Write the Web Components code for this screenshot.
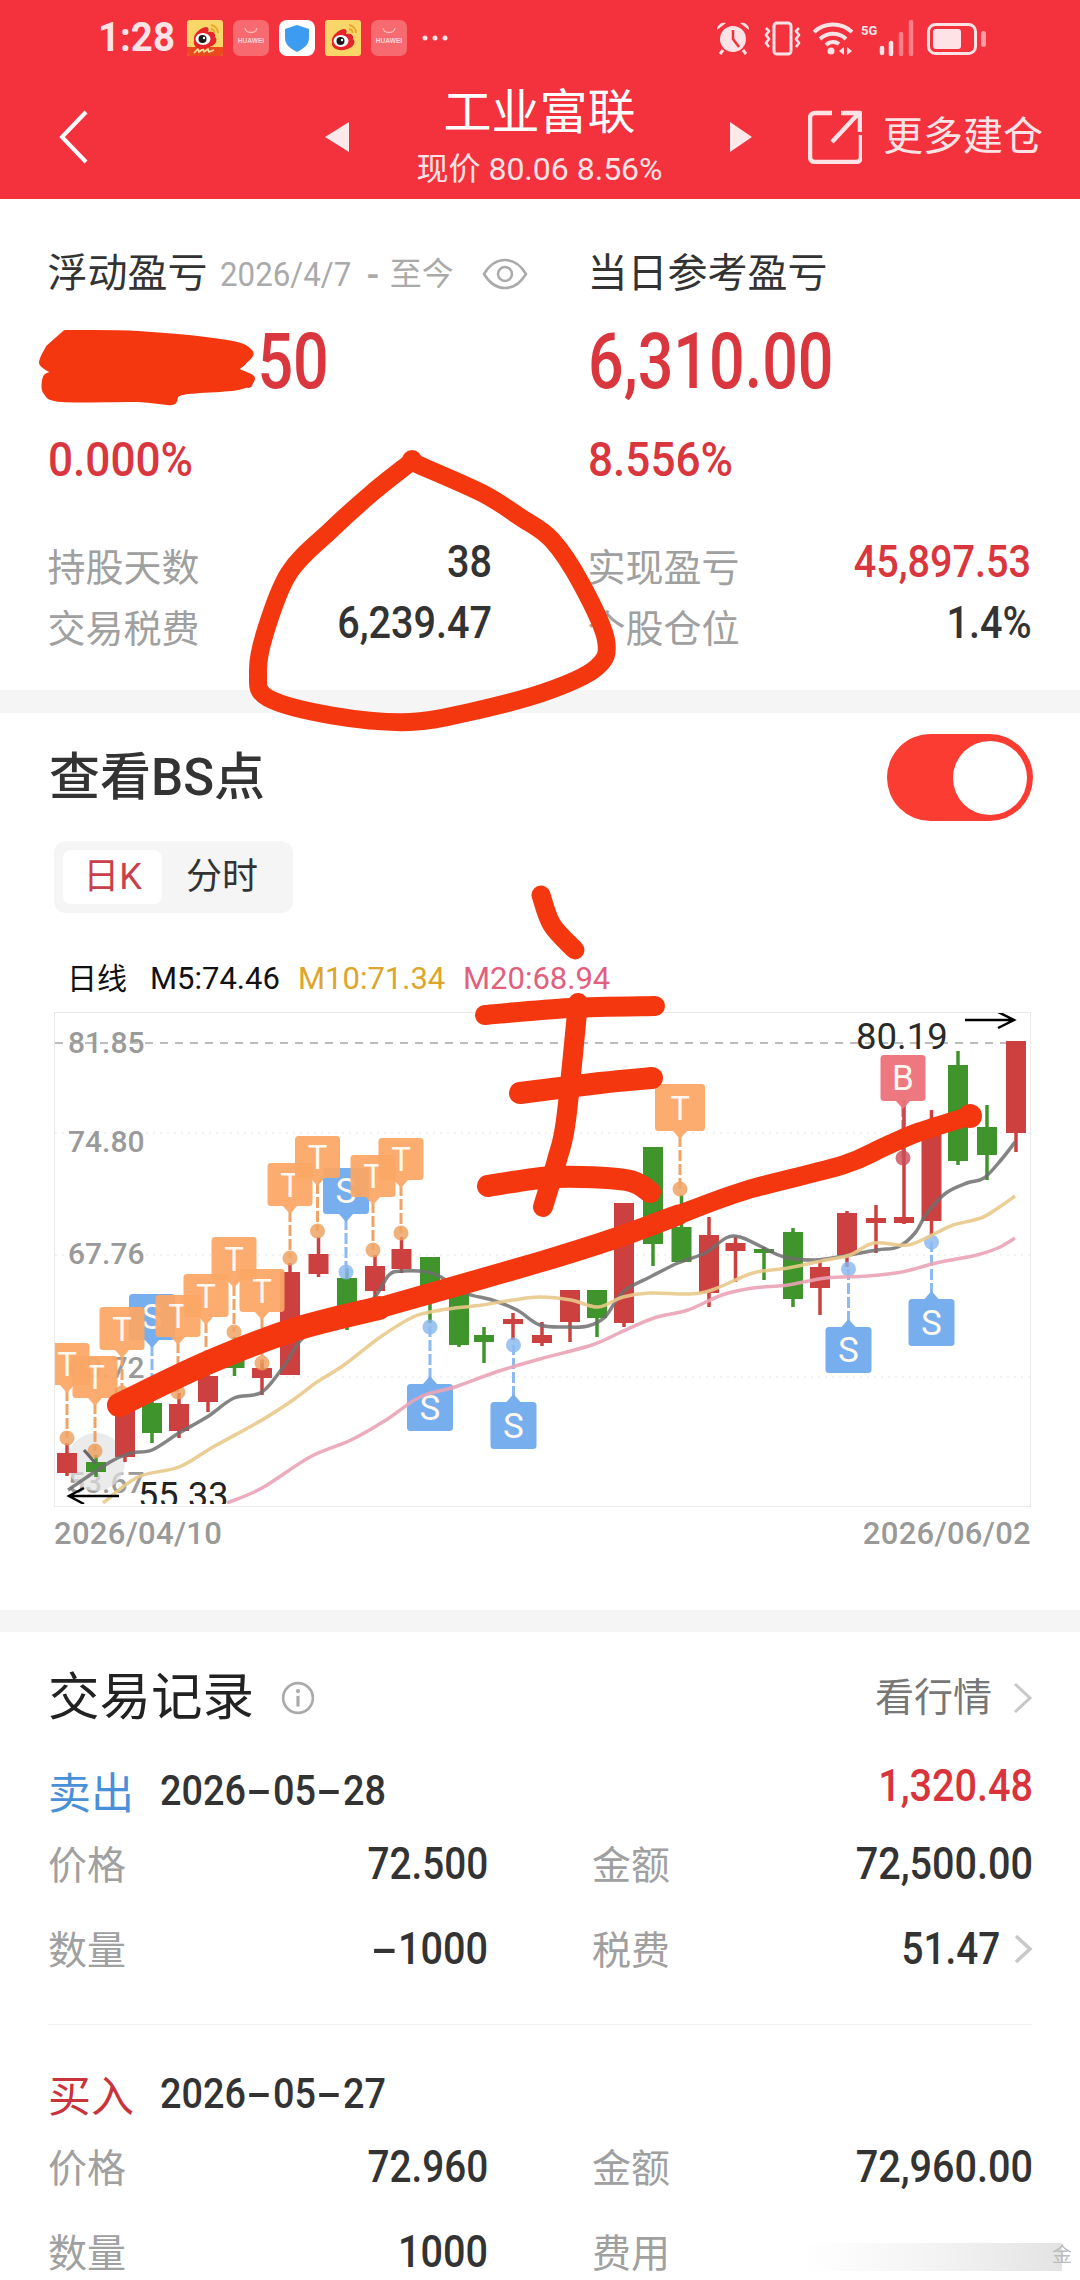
<!DOCTYPE html>
<html lang="zh">
<head>
<meta charset="utf-8">
<title>工业富联</title>
<style>
  html, body { margin: 0; padding: 0; background: #fff; }
  body {
    position: relative;
    width: 1080px;
    height: 2280px;
    overflow: hidden;
    font-family: Roboto, "Noto Sans CJK SC", sans-serif;
  }
</style>
</head>
<body>
<app-header></app-header>
<pnl-summary></pnl-summary>
<bs-panel></bs-panel>
<trade-list>
  <trade-record side="卖出" date="2026-05-28" profit="1,320.48" price="72.500" total="72,500.00" qty="-1000" fee-label="税费" fee="51.47"></trade-record>
  <trade-record side="买入" date="2026-05-27" price="72.960" total="72,960.00" qty="1000" fee-label="费用"></trade-record>
</trade-list>
<ink-layer></ink-layer>

<script>
const CJK = 'Roboto, "Noto Sans CJK SC", sans-serif';

// smooth line through points, page coordinates
function smooth(pts) {
  let d = `M${pts[0][0]} ${pts[0][1]}`;
  for (let i = 0; i < pts.length - 1; i++) {
    const p0 = pts[i - 1] || pts[i], p1 = pts[i], p2 = pts[i + 1], p3 = pts[i + 2] || p2;
    const c1x = p1[0] + (p2[0] - p0[0]) / 6, c1y = p1[1] + (p2[1] - p0[1]) / 6;
    const c2x = p2[0] - (p3[0] - p1[0]) / 6, c2y = p2[1] - (p3[1] - p1[1]) / 6;
    d += ` C${c1x.toFixed(1)} ${c1y.toFixed(1)} ${c2x.toFixed(1)} ${c2y.toFixed(1)} ${p2[0]} ${p2[1]}`;
  }
  return d;
}

// the app's digits are a narrow DIN style face, so Roboto gets squeezed
class NumText extends HTMLElement {
  constructor() {
    super();
    this.attachShadow({ mode: 'open' });
  }
  connectedCallback() {
    const sx = this.getAttribute('sx') || '0.9';
    const side = this.getAttribute('side') || 'left';
    this.shadowRoot.innerHTML = `
      <style>
        :host {
          display: inline-block;
          font-family: Roboto, sans-serif;
          white-space: nowrap;
          transform: scaleX(${sx});
          transform-origin: ${side} center;
        }
      </style><slot></slot>`;
  }
}
customElements.define('num-text', NumText);

class AppHeader extends HTMLElement {
  constructor() {
    super();
    this.attachShadow({ mode: 'open' });
  }
  weibo(strip) {
    return `<svg class="app" width="36" height="36" viewBox="0 0 36 36">
      <rect width="36" height="36" rx="3" fill="#f9d668"/>
      ${strip ? '<path d="M0 27H36V33a3 3 0 0 1-3 3H3a3 3 0 0 1-3-3z" fill="#ea4a1c"/><path d="M7 33l4-4 1 3 4-3 1 3 4-3 1 3 5-2" stroke="#fbe3a0" stroke-width="1.6" fill="none"/>' : ''}
      <path d="M7 ${strip ? 20 : 22}c-1-6 6-12 12-13 3 0 3 3 2 5 5-1 8 1 7 5 3 2 2 9-9 11C11 31 6 27 7 ${strip ? 20 : 22}z" fill="#e6242a"/>
      <ellipse cx="16" cy="${strip ? 19 : 21}" rx="7.5" ry="6" fill="#fff"/>
      <circle cx="15.5" cy="${strip ? 19 : 21}" r="4" fill="#1a1a1a"/>
      <circle cx="17" cy="${strip ? 18 : 20}" r="1.2" fill="#fff"/>
      <path d="M24 5a8 8 0 0 1 7 8M24 9a4 4 0 0 1 3.500 4" stroke="#e8a72c" stroke-width="1.800" fill="none"/>
    </svg>`;
  }
  huawei() {
    return `<svg class="app" width="36" height="36" viewBox="0 0 36 36">
      <rect width="36" height="36" rx="7" fill="#f76a70"/>
      <path d="M12 8c1 6 11 6 12 0" stroke="#fbbcbe" stroke-width="1.300" fill="none"/>
      <text x="18" y="23" font-family="Liberation Sans, sans-serif" font-size="6.600" font-weight="700" text-anchor="middle" fill="#fcd4d5">HUAWEI</text>
    </svg>`;
  }
  connectedCallback() {
    this.shadowRoot.innerHTML = `
      <style>
        :host {
          display: block;
          height: 199px;
          background: #f4323d;
          color: #fff;
          font-family: ${CJK};
        }
        .status {
          display: flex;
          align-items: center;
          height: 75px;
          padding-left: 98px;
          box-sizing: border-box;
        }
        .time {
          width: 89px;
          font-size: 40px;
          font-weight: 700;
          color: #fde3e5;
          line-height: 75px;
        }
        .apps { display: flex; align-items: center; gap: 10px; }
        .app { display: block; }
        .more { margin-left: 15px; display: block; }
        .sys { margin-left: 268px; display: block; }
        .nav {
          display: flex;
          align-items: center;
          height: 124px;
          padding-left: 58px;
        }
        .back { width: 267px; flex: none; }
        .center {
          width: 381px;
          flex: none;
          align-self: stretch;
          text-align: center;
          padding-top: 8px;
          box-sizing: border-box;
        }
        .title { font-size: 48px; line-height: 60px; }
        .sub { font-size: 32px; line-height: 40px; margin-top: 6px; color: #fde3e5; }
        .share { margin-left: 56px; }
        .open { margin-left: 21px; font-size: 40px; line-height: 60px; color: #fde3e5; white-space: nowrap; }
        svg { display: block; flex: none; }
      </style>
      <div class="status">
        <span class="time"><num-text sx="0.96">1:28</num-text></span>
        <div class="apps">
          ${this.weibo(true)}${this.huawei()}
          <svg class="app" width="36" height="36" viewBox="0 0 36 36">
            <rect width="36" height="36" rx="8" fill="#fff"/>
            <path d="M18 5l12 4v9c0 7-6 11-12 14C12 29 6 25 6 18V9z" fill="#3d9cf0"/>
          </svg>
          ${this.weibo(false)}${this.huawei()}
        </div>
        <svg class="more" width="26" height="8" viewBox="0 0 26 8">
          <circle cx="3" cy="4" r="2.500" fill="#fde3e5"/><circle cx="13" cy="4" r="2.500" fill="#fde3e5"/><circle cx="23" cy="4" r="2.500" fill="#fde3e5"/>
        </svg>
        <svg class="sys" width="272" height="36" viewBox="713 18 272 36" fill="none" stroke="#fde3e5">
          <!-- alarm -->
          <circle cx="730" cy="37" r="13" fill="#fde3e5" stroke="none"/>
          <path d="M730 28v9l6 8" stroke="#f4323d" stroke-width="2.500"/>
          <path d="M714 28a7 7 0 0 1 9-7zM746 28a7 7 0 0 0-9-7z" fill="#fde3e5" stroke="none"/>
          <path d="M720 48l-3 4M740 48l3 4" stroke-width="3"/>
          <!-- vibrate -->
          <rect x="771" y="21" width="17" height="31" rx="3" stroke-width="3"/>
          <path d="M763 26l3 3-3 4 3 4-3 4 3 4M796 26l-3 3 3 4-3 4 3 4-3 4" stroke-width="2.500"/>
          <!-- wifi -->
          <path d="M811 30a28 28 0 0 1 38 0M817 37a19 19 0 0 1 26 0M823 43a10 10 0 0 1 13-1" stroke-width="4"/>
          <circle cx="828" cy="49" r="3.500" fill="#fde3e5" stroke="none"/>
          <path d="M841 45l-5 4 5 4zM844 45l5 4-5 4z" fill="#fde3e5" stroke="none"/>
          <!-- signal -->
          <text x="858" y="33" font-family="Roboto, sans-serif" font-size="13" font-weight="700" fill="#fde3e5" stroke="none">5G</text>
          <path d="M879 46v5" stroke-width="4.500" stroke-linecap="round"/>
          <path d="M888 41v11" stroke-width="4.500" stroke-linecap="round"/>
          <path d="M898 32v20M908 20v32" stroke="#fb7f86" stroke-width="4.500" stroke-linecap="round"/>
          <!-- battery -->
          <rect x="925.500" y="22.500" width="47" height="29" rx="7" stroke-width="3"/>
          <rect x="930" y="27" width="28" height="20" rx="3" fill="#fde3e5" stroke="none"/>
          <rect x="978" y="29" width="5" height="16" rx="2.500" fill="#fb9da3" stroke="none"/>
        </svg>
      </div>
      <div class="nav">
        <div class="back">
          <svg width="30" height="54" viewBox="0 0 30 54" fill="none" stroke="#fff" stroke-width="4">
            <path d="M28 2L4 27l24 25"/>
          </svg>
        </div>
        <svg width="24" height="30" viewBox="0 0 24 30"><path d="M24 0v30L0 15z" fill="#fde8ea"/></svg>
        <div class="center">
          <div class="title">工业富联</div>
          <div class="sub">现价 80.06 8.56%</div>
        </div>
        <svg width="22" height="30" viewBox="0 0 22 30"><path d="M0 0v30l22-15z" fill="#fde8ea"/></svg>
        <svg class="share" width="54" height="54" viewBox="0 0 54 54" fill="none" stroke="#fde3e5" stroke-width="4.500" stroke-linejoin="round">
          <path d="M24 3H7a5 5 0 0 0-5 5v39a5 5 0 0 0 5 5h41a5 5 0 0 0 5-5V25"/>
          <path d="M24 32L50 4M33 3h19v19"/>
        </svg>
        <span class="open">更多建仓</span>
      </div>`;
  }
}
customElements.define('app-header', AppHeader);

class StatRow extends HTMLElement {
  constructor() {
    super();
    this.attachShadow({ mode: 'open' });
  }
  connectedCallback() {
    const value = this.getAttribute('value');
    const color = this.getAttribute('tone') === 'up' ? '#d9363e' : '#333';
    this.shadowRoot.innerHTML = `
      <style>
        :host {
          display: flex;
          justify-content: space-between;
          align-items: center;
          height: 61px;
          font-family: ${CJK};
        }
        .label { font-size: 38px; line-height: 50px; color: #a0a0a0; }
        .value { font-size: 44px; line-height: 50px; font-weight: 500; color: ${color}; padding-bottom: 12px; }
      </style>
      <span class="label"><slot></slot></span>
      <span class="value"><num-text side="right">${value}</num-text></span>`;
  }
}
customElements.define('stat-row', StatRow);

class PnlSummary extends HTMLElement {
  constructor() {
    super();
    this.attachShadow({ mode: 'open' });
  }
  connectedCallback() {
    this.shadowRoot.innerHTML = `
      <style>
        :host {
          display: grid;
          grid-template-columns: 540px 444px;
          padding: 50px 0 0 47.500px;
          height: 514px;
          box-sizing: border-box;
          border-bottom: 23px solid #f5f5f5;
          font-family: ${CJK};
        }
        .head { display: flex; align-items: center; height: 50px; font-size: 40px; line-height: 50px; color: #333; white-space: nowrap; }
        .range { display: flex; align-items: center; color: #aaa; font-size: 32px; margin-left: 12px; }
        .range num-text { font-size: 34px; margin-right: -11px; }
        .dash { font-family: Roboto, sans-serif; font-weight: 700; font-size: 34px; margin: 0 10px 0 15px; }
        .eye { margin-left: 28px; display: block; }
        .big { font-size: 77px; line-height: 80px; height: 80px; margin-top: 23px; font-weight: 500; color: #d9363e; white-space: nowrap; }
        .masked { padding-left: 192px; }
        .pct { font-size: 49px; line-height: 56px; height: 56px; margin-top: 30px; font-weight: 500; color: #d9363e; }
        .stats { margin-top: 49px; width: 445px; }
        .stats.right { width: 444px; }
      </style>
      <div>
        <div class="head">浮动盈亏
          <span class="range"><num-text sx="0.92">2026/4/7</num-text><span class="dash">-</span>至今</span>
          <svg class="eye" width="46" height="32" viewBox="0 0 46 32" fill="none" stroke="#aaa" stroke-width="2.500">
            <path d="M2 16C8 6 15 2 23 2s15 4 21 14c-6 10-13 14-21 14S8 26 2 16z"/>
            <circle cx="23" cy="16" r="7"/>
          </svg>
        </div>
        <div class="big masked"><num-text sx="0.815">.50</num-text></div>
        <div class="pct"><num-text>0.000%</num-text></div>
        <div class="stats">
          <stat-row value="38">持股天数</stat-row>
          <stat-row value="6,239.47">交易税费</stat-row>
        </div>
      </div>
      <div>
        <div class="head">当日参考盈亏</div>
        <div class="big"><num-text sx="0.815">6,310.00</num-text></div>
        <div class="pct"><num-text>8.556%</num-text></div>
        <div class="stats right">
          <stat-row value="45,897.53" tone="up">实现盈亏</stat-row>
          <stat-row value="1.4%">个股仓位</stat-row>
        </div>
      </div>`;
  }
}
customElements.define('pnl-summary', PnlSummary);

class KChart extends HTMLElement {
  constructor() {
    super();
    this.attachShadow({ mode: 'open' });
  }
  connectedCallback() {
    // x, body top, body bottom, wick top, wick bottom, colour (r/g)
    const candles = [
      [67,1453,1473,1443,1476,'r'],[96,1462,1472,1455,1477,'g'],[125,1410,1457,1400,1462,'r'],
      [152,1403,1433,1397,1443,'g'],[179,1404,1431,1393,1438,'r'],[208,1376,1402,1360,1412,'r'],
      [234.5,1345,1368,1337,1376,'g'],[262,1368,1378,1360,1395,'r'],[290,1272,1375,1263,1375,'r'],
      [318.5,1254,1274,1237,1277,'r'],[347,1278,1308,1268,1330,'g'],[375,1266,1291,1255,1300,'r'],
      [401.5,1249,1269,1237,1273,'r'],[430,1257,1297,1257,1323,'g'],[459,1290,1345,1290,1347,'g'],
      [484,1335,1342,1327,1363,'g'],[513,1319,1324,1313,1340,'r'],[542,1335,1343,1322,1346,'r'],
      [570,1290,1322,1290,1342,'r'],[597,1290,1318,1290,1337,'g'],[624,1203,1323,1203,1327,'r'],
      [653,1147,1244,1147,1266,'g'],[681.5,1227,1262,1195,1262,'g'],[709,1235,1293,1217,1307,'r'],
      [735.5,1243,1251,1237,1282,'r'],[764,1249,1253,1247,1280,'g'],[793,1232,1299,1228,1307,'g'],
      [820,1267,1288,1260,1315,'r'],[847,1213,1255,1211,1267,'r'],[876,1218,1223,1205,1253,'r'],
      [904,1217,1223,1100,1224,'r'],[931.5,1133,1221,1110,1237,'r'],[958,1065,1161,1051,1165,'g'],
      [987,1127,1155,1105,1180,'g'],[1016,1041,1133,1041,1152,'r']
    ];
    const colors = { r: '#cc4040', g: '#3f942b' };
    const candleSvg = candles.map(([x, t, b, wt, wb, c]) => `
      <path d="M${x} ${wt}V${wb}" stroke="${colors[c]}" stroke-width="3.500"/>
      <rect x="${x - 10}" y="${t}" width="20" height="${b - t}" fill="${colors[c]}"/>`).join('');

    const m5 = [[68,1490],[110,1462],[131,1453],[152,1450],[179,1433],[207,1417],[234,1398],[262,1392],[286,1363],[303,1338],[340,1315],[372,1300],[389,1275],[403,1271],[427,1272],[441,1277],[465,1293],[492,1300],[517,1310],[540,1325],[567,1327],[588,1326],[605,1317],[623,1292],[650,1277],[678,1263],[705,1253],[726,1238],[740,1237],[760,1246],[784,1257],[815,1260],[843,1256],[877,1250],[898,1247],[915,1233],[927,1213],[946,1193],[967,1183],[984,1178],[1001,1160],[1015,1142]];
    const m10 = [[103,1503],[138,1477],[179,1467],[213,1447],[262,1420],[293,1400],[317,1382],[344,1365],[379,1338],[413,1317],[441,1310],[482,1305],[513,1300],[540,1297],[571,1300],[598,1307],[623,1297],[650,1293],[688,1294],[712,1290],[753,1273],[788,1268],[826,1260],[850,1255],[874,1243],[908,1245],[936,1233],[953,1225],[981,1218],[998,1208],[1015,1196]];
    const m20 = [[227,1503],[262,1488],[310,1457],[351,1440],[386,1420],[420,1397],[455,1387],[496,1372],[540,1359],[592,1345],[619,1333],[654,1318],[688,1310],[722,1295],[753,1288],[788,1285],[826,1278],[867,1276],[902,1272],[936,1263],[977,1255],[998,1248],[1015,1238]];

    // label, x, box top, box bottom, dot y, half width
    const marks = [
      ['T',95,1356,1398,1451,22.5],['T',67,1343,1385,1438,22.5],['S',152,1294,1340,1392,23],
      ['T',122,1307,1350,1393,22.5],['T',178,1295,1337,1392,22.5],['T',234,1237,1280,1332,22.5],
      ['T',206,1274,1317,1366,22.5],['T',262,1269,1312,1363,22.5],['S',346,1168,1214,1272,23],
      ['T',290,1163,1206,1258,22.5],['T',317.5,1136,1178,1231,22.5],['T',373,1155,1197,1250,22.5],
      ['T',401,1138,1180,1233,22.5],['S',430,1384,1431,1327,23],['S',513.5,1402,1449,1345,23],
      ['T',680,1084,1131,1189,25],['B',903,1055,1101,1158,22.5],['S',848.5,1327,1373,1269,23],
      ['S',931.500,1299,1346,1242,23]
    ];
    const tone = { T: ['#fba766', '#ef9f5c'], S: ['#6fa9ee', '#86b6f0'], B: ['#ee7079', '#cc4c56'] };
    const markSvg = marks.map(([l, x, t, b, dot, hw]) => {
      const [fill, line] = tone[l];
      const below = dot > b;
      const from = below ? b + 5 : t - 5;
      const tip = below
        ? `M${x - 7} ${b}L${x} ${b + 8}L${x + 7} ${b}z`
        : `M${x - 7} ${t}L${x} ${t - 8}L${x + 7} ${t}z`;
      return `
      <g opacity="0.94">
        <path d="M${x} ${from}V${dot}" stroke="${line}" stroke-width="3" stroke-dasharray="11 3"/>
        <circle cx="${x}" cy="${dot}" r="7.500" fill="${line}" opacity="0.85"/>
        <path d="${tip}" fill="${fill}"/>
        <rect x="${x - hw}" y="${t}" width="${hw * 2}" height="${b - t}" rx="3.500" fill="${fill}"/>
        <text x="${x}" y="${(t + b) / 2 + 12}" font-size="${l === 'T' ? 33 : 35}" text-anchor="middle" fill="#fff8f0">${l}</text>
      </g>`;
    }).join('');

    const axis = [['81.85',1053],['74.80',1152],['67.76',1264],['60.72',1378],['53.67',1493]]
      .map(([t, y]) => `<text x="68" y="${y}" font-size="30" font-weight="500" fill="#9a9a9a">${t}</text>`).join('');

    this.shadowRoot.innerHTML = `
      <style>
        :host { display: block; width: 977px; height: 495px; font-family: Roboto, sans-serif; }
        svg { display: block; }
      </style>
      <svg width="977" height="495" viewBox="54 1012 977 495" font-family="Roboto, sans-serif">
        <defs><clipPath id="plot"><rect x="55" y="1013" width="975" height="491"/></clipPath></defs>
        <rect x="54.500" y="1012.500" width="976" height="494" fill="none" stroke="#e9e9e9"/>
        <path d="M55 1133H1030M55 1255H1030M55 1377H1030" stroke="#eeeeee" stroke-width="1.500" stroke-dasharray="2 5"/>
        <g clip-path="url(#plot)">
          ${axis}
          <path d="M55 1043H1030" stroke="#a8a8a8" stroke-width="1.500" stroke-dasharray="8 7"/>
          <circle cx="96" cy="1462" r="29" fill="#e2e2e2" opacity="0.7"/>
          ${candleSvg}
          ${markSvg}
          <g fill="none">
            <path d="${smooth(m5)}" stroke="#6f6f6f" stroke-width="3.500" opacity="0.85"/>
            <path d="${smooth(m10)}" stroke="#e8c98a" stroke-width="3.500" opacity="0.9"/>
            <path d="${smooth(m20)}" stroke="#eba3b6" stroke-width="3.500" opacity="0.9"/>
          </g>
          <path d="M84 1450l12 14" stroke="#666" stroke-width="3" fill="none"/>
          <text x="138" y="1508" font-size="36" fill="#222">55.33</text>
          <text x="856" y="1049" font-size="36.500" fill="#2a2a2a">80.19</text>
          <path d="M119 1496H70M84 1488l-15 8 15 8" fill="none" stroke="#000" stroke-width="2.500"/>
          <path d="M965 1020H1014M998 1012l16 8-16 8" fill="none" stroke="#000" stroke-width="2.500"/>
        </g>
      </svg>`;
  }
}
customElements.define('k-chart', KChart);

class BsPanel extends HTMLElement {
  constructor() {
    super();
    this.attachShadow({ mode: 'open' });
  }
  connectedCallback() {
    this.shadowRoot.innerHTML = `
      <style>
        :host {
          display: block;
          height: 919px;
          box-sizing: border-box;
          padding-top: 21px;
          border-bottom: 22px solid #f5f5f5;
          font-family: ${CJK};
        }
        .top {
          display: flex;
          justify-content: space-between;
          align-items: center;
          height: 87px;
          padding: 0 47px 0 49px;
        }
        h2 { margin: 0; font-size: 51px; line-height: 60px; font-weight: 500; color: #333; }
        .switch {
          width: 146px;
          height: 87px;
          border-radius: 44px;
          background: #fb3c33;
          display: flex;
          justify-content: flex-end;
          align-items: center;
          padding-right: 6px;
          box-sizing: border-box;
        }
        .knob { width: 74px; height: 74px; border-radius: 50%; background: #fff; }
        .tabs {
          display: flex;
          align-items: center;
          width: 239px;
          height: 72px;
          margin: 20px 0 0 54px;
          padding-left: 9px;
          box-sizing: border-box;
          background: #f5f5f5;
          border-radius: 12px;
          font-size: 36px;
          color: #333;
        }
        .tab { height: 54px; line-height: 54px; text-align: center; }
        .tab.on { width: 99px; background: #fff; border-radius: 8px; color: #c9404a; }
        .tab.off { width: 112px; margin-left: 4px; }
        .legend {
          display: flex;
          align-items: center;
          height: 40px;
          margin: 46px 0 13px 67px;
          font-size: 31px;
          line-height: 40px;
          white-space: nowrap;
        }
        .legend .name { font-size: 30px; color: #111; width: 83px; }
        .legend .m5 { color: #111; width: 148px; }
        .legend .m10 { color: #dca52c; width: 165px; }
        .legend .m20 { color: #e0607e; }
        k-chart { margin-left: 54px; }
        .dates {
          display: flex;
          justify-content: space-between;
          width: 977px;
          height: 40px;
          margin: 7px 0 0 54px;
          font-size: 31px;
          line-height: 40px;
          color: #999;
          font-weight: 500;
          letter-spacing: 0.3px;
        }
      </style>
      <div class="top">
        <h2>查看BS点</h2>
        <div class="switch"><div class="knob"></div></div>
      </div>
      <div class="tabs">
        <span class="tab on">日K</span>
        <span class="tab off">分时</span>
      </div>
      <div class="legend">
        <span class="name">日线</span>
        <span class="m5">M5:74.46</span>
        <span class="m10">M10:71.34</span>
        <span class="m20">M20:68.94</span>
      </div>
      <k-chart></k-chart>
      <div class="dates"><span>2026/04/10</span><span>2026/06/02</span></div>`;
  }
}
customElements.define('bs-panel', BsPanel);

class TradeList extends HTMLElement {
  constructor() {
    super();
    this.attachShadow({ mode: 'open' });
  }
  connectedCallback() {
    this.shadowRoot.innerHTML = `
      <style>
        :host { display: block; padding: 36px 48px 0; font-family: ${CJK}; }
        .head { display: flex; align-items: center; height: 60px; margin-bottom: 32px; }
        h2 { margin: 0; font-size: 51.500px; line-height: 60px; font-weight: 400; color: #222; }
        .info { margin-left: 27px; display: block; }
        .link { margin-left: auto; font-size: 39px; line-height: 56px; color: #777; }
        .chev { margin-left: 21px; margin-right: -1px; display: block; }
      </style>
      <div class="head">
        <h2>交易记录</h2>
        <svg class="info" width="34" height="34" viewBox="0 0 32 32" fill="none" stroke="#aaa" stroke-width="2.500">
          <circle cx="16" cy="16" r="14"/>
          <path d="M16 14v10" stroke-width="3"/>
          <circle cx="16" cy="9.500" r="2" fill="#aaa" stroke="none"/>
        </svg>
        <span class="link">看行情</span>
        <svg class="chev" width="20" height="32" viewBox="0 0 20 32" fill="none" stroke="#c8c8c8" stroke-width="3">
          <path d="M2 2l15 14L2 30"/>
        </svg>
      </div>
      <slot></slot>`;
  }
}
customElements.define('trade-list', TradeList);

class TradeRecord extends HTMLElement {
  constructor() {
    super();
    this.attachShadow({ mode: 'open' });
  }
  connectedCallback() {
    const side = this.getAttribute('side');
    const profit = this.getAttribute('profit');
    const fee = this.getAttribute('fee');
    const isSell = side === '卖出';
    const wide = (s) => s.replace(/-/g, '<span class="minus">-</span>');
    this.shadowRoot.innerHTML = `
      <style>
        :host {
          display: block;
          font-family: ${CJK};
          border-bottom: 1px solid #efefef;
          padding-bottom: 47px;
          margin-bottom: 38px;
        }
        :host(:last-child) { border-bottom: 0; margin-bottom: 0; }
        .top { display: flex; align-items: center; height: 60px; }
        .side { font-size: 43px; color: ${isSell ? '#4a90d9' : '#c9343c'}; width: 112px; }
        .date { font-size: 42px; font-weight: 500; color: #333; }
        .minus { display: inline-block; width: 30px; text-align: center; transform: scaleX(2); }
        .profit { margin-left: auto; margin-right: -1px; font-size: 44px; font-weight: 500; color: #d9343c; padding-bottom: 8px; }
        .row {
          display: grid;
          grid-template-columns: 100px 340px 104px 100px 1fr;
          align-items: center;
          height: 60px;
          margin-top: 12px;
        }
        .row + .row { margin-top: 25px; }
        .label { font-size: 39px; color: #a0a0a0; }
        .num { text-align: right; font-size: 44px; font-weight: 500; color: #333; white-space: nowrap; padding-top: 4px; }
        .total { margin-right: -1px; }
        .fee { display: flex; justify-content: flex-end; align-items: center; margin-right: -1px; }
        .fee svg { margin-left: 14px; display: block; }
      </style>
      <div class="top">
        <span class="side">${side}</span>
        <span class="date"><num-text sx="0.9">${wide(this.getAttribute('date'))}</num-text></span>
        ${profit ? `<span class="profit"><num-text side="right">${profit}</num-text></span>` : ''}
      </div>
      <div class="row">
        <span class="label">价格</span>
        <span class="num"><num-text side="right" sx="0.88">${this.getAttribute('price')}</num-text></span>
        <span></span>
        <span class="label">金额</span>
        <span class="num total"><num-text side="right" sx="0.9">${this.getAttribute('total')}</num-text></span>
      </div>
      <div class="row">
        <span class="label">数量</span>
        <span class="num"><num-text side="right" sx="0.9">${wide(this.getAttribute('qty'))}</num-text></span>
        <span></span>
        <span class="label">${this.getAttribute('fee-label')}</span>
        ${fee ? `<span class="num fee"><num-text side="right" sx="0.88">${fee}</num-text>
          <svg width="19" height="30" viewBox="0 0 19 30" fill="none" stroke="#c8c8c8" stroke-width="3.500"><path d="M2 2l14 13L2 28"/></svg></span>` : '<span></span>'}
      </div>`;
  }
}
customElements.define('trade-record', TradeRecord);

// the red pen marks someone drew on top of the screenshot
class InkLayer extends HTMLElement {
  constructor() {
    super();
    this.attachShadow({ mode: 'open' });
  }
  connectedCallback() {
    const circle = [[412,462],[482,493],[520,517],[552,540],[582,585],[606,640],[596,668],[545,692],[470,712],[410,722],[335,716],[268,698],[258,673],[265,633],[289,573],[331,530],[372,493],[411,462]];
    const blob = [[65,332],[138,333],[227,342],[251,352],[244,363],[238,370],[253,378],[238,388],[182,393],[172,403],[138,400],[62,400],[45,392],[45,377],[52,372],[41,363],[48,347]];
    const trendA = [[119,1405],[207,1363],[293,1330],[379,1308]];
    const trendB = [[379,1308],[540,1262],[616,1238],[678,1215]];
    const trendC = [[678,1215],[747,1190],[843,1165],[884,1147],[919,1132],[970,1116]];
    this.shadowRoot.innerHTML = `
      <style>
        :host { position: absolute; left: 0; top: 0; width: 1080px; height: 2280px; pointer-events: none; }
        svg { display: block; }
      </style>
      <svg width="1080" height="2280" viewBox="0 0 1080 2280">
        <defs>
          <linearGradient id="fade" x1="0" x2="1" y1="0" y2="0">
            <stop offset="0" stop-color="#ddd" stop-opacity="0"/>
            <stop offset="1" stop-color="#ccc" stop-opacity="0.55"/>
          </linearGradient>
        </defs>
        <rect x="800" y="2243" width="262" height="28" fill="url(#fade)"/>
        <text x="1052" y="2262" font-family="Noto Sans CJK SC, sans-serif" font-size="20" fill="#bbb">金</text>
        <g fill="none" stroke="#f5370f" stroke-linecap="round" stroke-linejoin="round">
          <path d="${smooth(blob)}z" fill="#f5370f" stroke-width="4"/>
          <path d="${smooth(circle)}" stroke-width="18"/>
          <circle cx="412" cy="460" r="10" fill="#f5370f" stroke="none"/>
          <path d="${smooth(trendA)}" stroke-width="24"/>
          <path d="${smooth(trendB)}" stroke-width="21"/>
          <path d="${smooth(trendC)}" stroke-width="19"/>
          <circle cx="970" cy="1116" r="12" fill="#f5370f" stroke="none"/>
          <!-- 去 -->
          <path d="${smooth([[541,895],[552,925],[575,950]])}" stroke-width="19"/>
          <path d="${smooth([[485,1015],[570,1008],[655,1006]])}" stroke-width="20"/>
          <path d="${smooth([[578,1003],[566,1120],[557,1160],[543,1207]])}" stroke-width="20"/>
          <path d="${smooth([[520,1093],[600,1083],[652,1078]])}" stroke-width="22"/>
          <path d="${smooth([[488,1186],[554,1177],[626,1180],[650,1192]])}" stroke-width="22"/>
        </g>
      </svg>`;
  }
}
customElements.define('ink-layer', InkLayer);
</script>
</body>
</html>
